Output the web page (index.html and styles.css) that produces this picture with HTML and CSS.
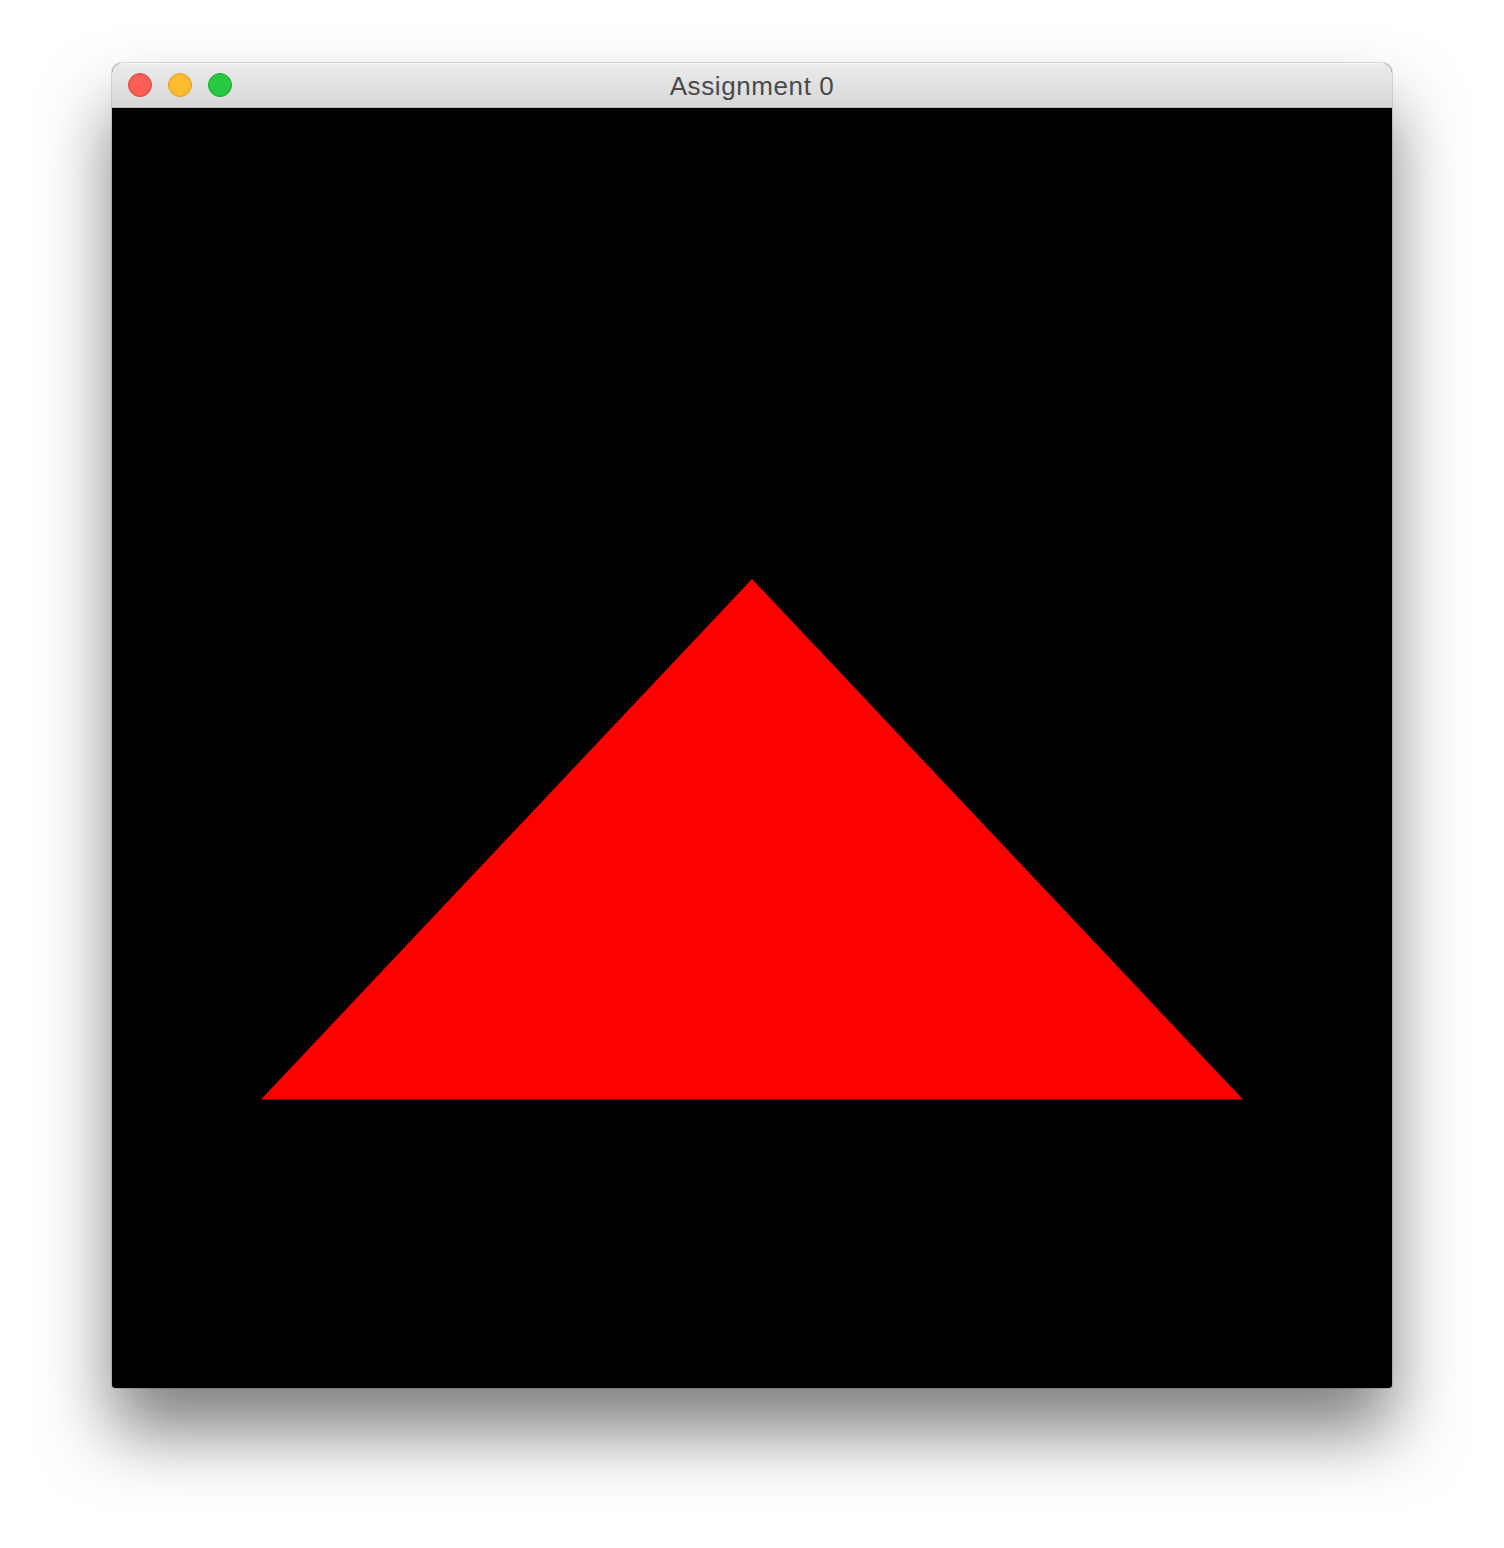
FILE: index.html
```html
<!DOCTYPE html>
<html>
<head>
<meta charset="utf-8">
<title>Assignment 0</title>
<link rel="stylesheet" href="styles.css">
</head>
<body>
<div class="stage">
  <div class="window">
    <div class="titlebar">
      <div class="lights">
        <span class="light close"></span>
        <span class="light minimize"></span>
        <span class="light zoom"></span>
      </div>
      <div class="title">Assignment 0</div>
    </div>
    <div class="canvas">
      <svg class="scene" width="1280" height="1280" viewBox="0 0 1280 1280">
        <polygon points="640,471 149,991.5 1131,991.5" fill="#fd0000"/>
      </svg>
    </div>
  </div>
</div>
</body>
</html>
```
FILE: styles.css
```css
html, body {
  margin: 0;
  padding: 0;
  background: #ffffff;
}
.stage {
  padding: 63px 0 0 112px;
  height: 1548px;
  box-sizing: border-box;
}
.window {
  width: 1280px;
  border-radius: 10px 10px 4px 4px;
  box-shadow: 0 44px 70px rgba(0, 0, 0, 0.5), 0 0 0 1px rgba(0, 0, 0, 0.12);
  overflow: hidden;
  background: #000;
}
.titlebar {
  position: relative;
  height: 44px;
  border-bottom: 1px solid #b9b9b9;
  background: linear-gradient(#ececec, #d6d6d6);
  display: flex;
  align-items: center;
  justify-content: center;
  box-shadow: inset 0 1px 0 #f6f6f6;
}
.lights {
  position: absolute;
  left: 16px;
  top: 10px;
  display: flex;
  gap: 16px;
}
.light {
  width: 22px;
  height: 22px;
  border-radius: 50%;
  display: block;
}
.close { background: #fd5f57; border: 1px solid #e0443e; }
.minimize { background: #febc2e; border: 1px solid #dea123; }
.zoom { background: #28c840; border: 1px solid #1aab29; }
.title {
  font-family: "Liberation Sans", Arial, sans-serif;
  font-size: 26px;
  color: #4a4a4a;
  letter-spacing: 0.6px;
  padding-top: 3px;
}
.canvas {
  width: 1280px;
  height: 1280px;
  background: #000;
}
.scene {
  display: block;
}
```
